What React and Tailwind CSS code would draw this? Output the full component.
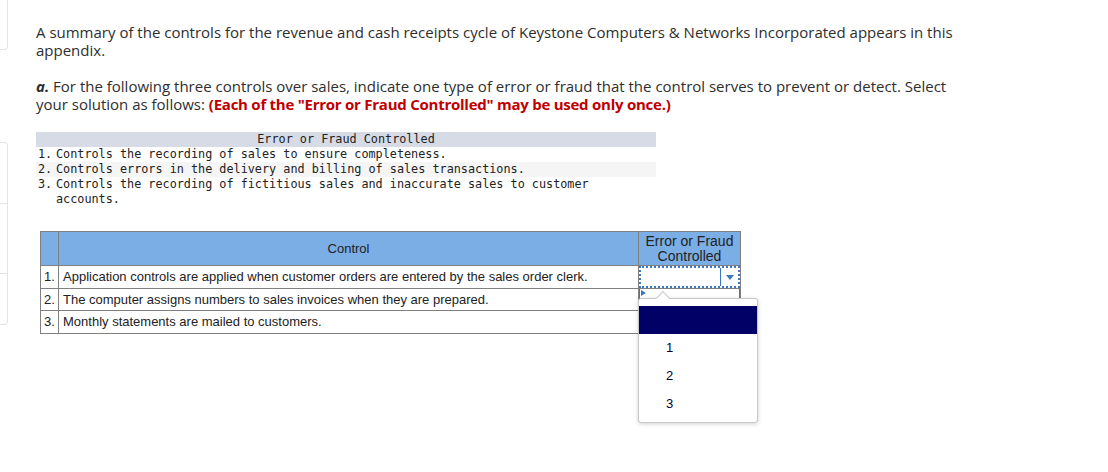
const controls = [
  "Application controls are applied when customer orders are entered by the sales order clerk.",
  "The computer assigns numbers to sales invoices when they are prepared.",
  "Monthly statements are mailed to customers.",
];

const errors = [
  "Controls the recording of sales to ensure completeness.",
  "Controls errors in the delivery and billing of sales transactions.",
  "Controls the recording of fictitious sales and inaccurate sales to customer accounts.",
];

const DropdownPopup = () => (
  <div className="absolute left-[598px] top-[67px] z-10 h-[125px] w-[120px] rounded-[3px] border border-[#c8c8c8] bg-white pt-[7px] shadow-[0_1px_4px_rgba(0,0,0,0.18)]">
    <div className="absolute -top-[6px] left-[19px] h-[10px] w-[10px] rotate-45 border-l border-t border-[#c8c8c8] bg-white" />
    <div className="relative h-[28px] w-full bg-[#000066]" />
    {["1", "2", "3"].map((n) => (
      <div
        key={n}
        className="relative flex h-[28px] items-center pl-[27px] font-['Liberation_Sans',Arial,sans-serif] text-[13px] text-[#000033]"
      >
        {n}
      </div>
    ))}
  </div>
);

export default function App() {
  return (
    <div className="flex min-h-[472px] w-[1108px] bg-white font-['Open_Sans',sans-serif] text-[#2e2e2e]">
      {/* left side cards */}
      <div className="flex w-[8px] shrink-0 flex-col">
        <div className="-mt-[2px] h-[52px] rounded-br-[4px] border-b border-r border-[#e4e4e4]" />
        <div className="mt-[92px] flex h-[183px] flex-col rounded-r-[4px] border border-l-0 border-[#e4e4e4]">
          <div className="h-[61px] border-b border-[#e4e4e4]" />
          <div className="h-[70px] border-b border-[#e4e4e4]" />
        </div>
      </div>

      <div className="pl-[28px] pt-[23px]">
        <p className="w-[930px] text-[15px] leading-[18px]">
          A summary of the controls for the revenue and cash receipts cycle of Keystone Computers &amp; Networks Incorporated appears in this appendix.
        </p>
        <p className="mt-[18px] w-[930px] text-[15px] leading-[18px]">
          <b className="italic">a.</b> For the following three controls over sales, indicate one type of error or fraud that the control serves to prevent or detect. Select your solution as follows:{" "}
          <b className="tracking-[-0.25px] text-[#c00000]">(Each of the "Error or Fraud Controlled" may be used only once.)</b>
        </p>

        <div className="mt-[19px] w-[620px] font-['DejaVu_Sans_Mono',monospace] text-[11.8px] leading-[15px] text-[#222]">
          <div className="bg-[#d6dbe6] text-center">Error or Fraud Controlled</div>
          {errors.map((e, i) => (
            <div key={i} className={`flex pl-[2px] ${i === 1 ? "bg-[#f5f5f5]" : ""}`}>
              <span className="w-[18px] shrink-0">{i + 1}.</span>
              <span>{e}</span>
            </div>
          ))}
        </div>

        <div className="relative ml-[4px] mt-[24px] w-[700px]">
          <table className="w-[700px] table-fixed border-collapse font-['Liberation_Sans',Arial,sans-serif] text-[13px] text-[#222]">
            <colgroup>
              <col className="w-[18px]" />
              <col className="w-[580px]" />
              <col className="w-[102px]" />
            </colgroup>
            <thead>
              <tr className="h-[34px] bg-[#7aaee5]">
                <th className="border border-[#808080] font-normal" />
                <th className="border border-[#808080] font-normal">Control</th>
                <th className="border border-[#808080] text-[14px] font-normal leading-[15px]">
                  Error or Fraud
                  <br />
                  Controlled
                </th>
              </tr>
            </thead>
            <tbody>
              {controls.map((c, i) => (
                <tr key={i} className={i === 1 ? "h-[22px]" : "h-[23px]"}>
                  <td className="border border-[#808080] pl-[3px]">{i + 1}.</td>
                  <td className="border border-[#808080] pl-[4px]">{c}</td>
                  <td className="relative border border-[#808080] p-0">
                    {i === 0 && (
                      <div className="absolute inset-0 flex justify-end border-2 border-dotted border-[#3b78c4] bg-white">
                        <div className="flex w-[18px] items-center justify-center border-l border-[#3b78c4]">
                          <svg width="8" height="5" viewBox="0 0 8 5">
                            <path d="M0 0h8L4 5z" fill="#3b78c4" />
                          </svg>
                        </div>
                      </div>
                    )}
                    {i === 1 && (
                      <div className="absolute inset-0 border-x border-[#3b78c4]">
                        <svg className="absolute left-[1px] top-[1px]" width="5" height="6" viewBox="0 0 5 6">
                          <path d="M0 0v6l5-3z" fill="#3b78c4" />
                        </svg>
                      </div>
                    )}
                  </td>
                </tr>
              ))}
            </tbody>
          </table>
          <DropdownPopup />
        </div>
      </div>
    </div>
  );
}
